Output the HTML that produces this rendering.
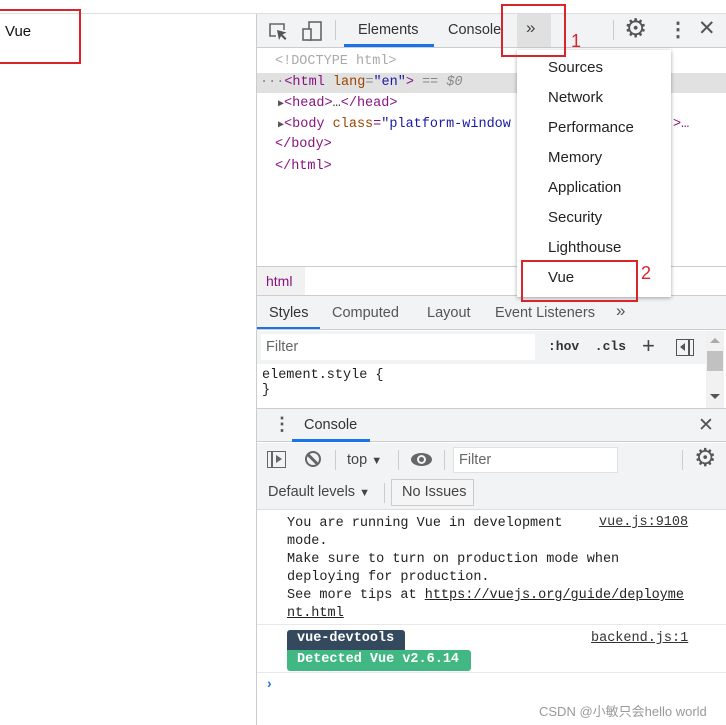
<!DOCTYPE html>
<html><head><style>
*{box-sizing:border-box;margin:0;padding:0}
body{width:726px;height:725px;position:relative;overflow:hidden;background:#fff;font-family:"Liberation Sans","Noto Sans CJK SC",sans-serif;font-size:14px;color:#333}
.a{position:absolute}
.m{font-family:"Liberation Mono",monospace;font-size:13.5px;white-space:pre}
.ui{font-size:14.5px;color:#444}
.red{position:absolute;border:2px solid #d9232d}
.rn{position:absolute;color:#d9232d;font-size:18px}
.tab{position:absolute;font-size:14.5px;color:#333}
</style></head><body>
<div class="a" style="left:0;top:13px;width:726px;height:1px;background:#ddd"></div>
<div class="a" style="left:5px;top:23px;font-size:15px;color:#111">Vue</div>
<div class="red" style="left:-2px;top:9px;width:83px;height:55px"></div>

<div class="a" style="left:256px;top:14px;width:470px;height:711px;border-left:1px solid #ccc;background:#fff"></div>
<div class="a" style="left:257px;top:14px;width:469px;height:34px;background:#f1f3f4;border-bottom:1px solid #ccc"></div>
<svg class="a" style="left:268px;top:21px" width="20" height="20" viewBox="0 0 20 20"><path d="M8 15H2V3h14v6" fill="none" stroke="#666" stroke-width="1.6"/><path d="M9 9l2 10 2-4 4 4 1.5-1.5-4-4 4-2z" fill="#555"/></svg>
<svg class="a" style="left:301px;top:20px" width="22" height="22" viewBox="0 0 22 22"><rect x="8" y="2" width="12" height="18" fill="none" stroke="#666" stroke-width="1.6"/><rect x="2" y="9" width="8" height="11" fill="#f1f3f4" stroke="#666" stroke-width="1.6"/></svg>
<div class="a" style="left:335px;top:20px;width:1px;height:20px;background:#ccc"></div>
<div class="tab" style="left:358px;top:22px">Elements</div>
<div class="a" style="left:344px;top:44px;width:90px;height:3px;background:#1a73e8"></div>
<div class="tab" style="left:448px;top:22px">Console</div>
<div class="a" style="left:517px;top:14px;width:34px;height:33px;background:#e0e0e0"></div>
<div class="a" style="left:526px;top:18px;font-size:17px;color:#444">»</div>
<div class="a" style="left:613px;top:20px;width:1px;height:20px;background:#ccc"></div>
<div class="a" style="left:624px;top:13px;font-size:26px;color:#555">⚙</div>
<div class="a" style="left:668px;top:17px;font-size:20px;color:#555;font-weight:bold">⋮</div>
<div class="a" style="left:698px;top:16px;font-size:21px;color:#555">✕</div>

<div class="a" style="left:257px;top:73px;width:469px;height:20px;background:#e1e1e1"></div>
<div class="a m" style="left:275px;top:54px;color:#aaa">&lt;!DOCTYPE html&gt;</div>
<div class="a m" style="left:260px;top:75px;color:#888">···<span style="color:#881280">&lt;html</span> <span style="color:#994500">lang</span>=<span style="color:#1a1aa6">"en"</span><span style="color:#881280">&gt;</span> == <i>$0</i></div>
<div class="a m" style="left:278px;top:96px;color:#881280"><span style="color:#555;font-size:10px">▶</span>&lt;head&gt;<span style="color:#333">…</span>&lt;/head&gt;</div>
<div class="a m" style="left:278px;top:117px;color:#881280"><span style="color:#555;font-size:10px">▶</span>&lt;body <span style="color:#994500">class</span>=<span style="color:#1a1aa6">"platform-window</span></div>
<div class="a m" style="left:673px;top:117px;color:#881280">&gt;…</div>
<div class="a m" style="left:275px;top:137px;color:#881280">&lt;/body&gt;</div>
<div class="a m" style="left:275px;top:159px;color:#881280">&lt;/html&gt;</div>

<div class="a" style="left:257px;top:266px;width:469px;height:30px;background:#fff;border-top:1px solid #ccc;border-bottom:1px solid #ccc"></div>
<div class="a" style="left:257px;top:267px;width:48px;height:28px;background:#f1f1f1"></div>
<div class="a" style="left:266px;top:273px;font-size:14px;color:#881280">html</div>

<div class="a" style="left:257px;top:296px;width:469px;height:34px;background:#f1f3f4;border-bottom:1px solid #ccc"></div>
<div class="tab" style="left:269px;top:305px">Styles</div>
<div class="a" style="left:257px;top:327px;width:63px;height:2px;background:#1a73e8"></div>
<div class="tab" style="left:332px;top:305px;color:#555">Computed</div>
<div class="tab" style="left:427px;top:305px;color:#555">Layout</div>
<div class="tab" style="left:495px;top:305px;color:#555">Event Listeners</div>
<div class="a" style="left:616px;top:301px;font-size:17px;color:#555">»</div>
<div class="a" style="left:257px;top:331px;width:449px;height:33px;background:#f1f3f4"></div>
<div class="a" style="left:261px;top:334px;width:274px;height:26px;background:#fff"></div>
<div class="a ui" style="left:266px;top:339px;color:#666">Filter</div>
<div class="a m" style="left:548px;top:339px;font-weight:bold;color:#333;font-size:13px">:hov  .cls</div>
<div class="a" style="left:642px;top:333px;font-size:22px;color:#444">+</div>
<div class="a" style="left:676px;top:339px;width:18px;height:17px;border:1.5px solid #555"></div>
<div class="a" style="left:688px;top:339px;width:1.5px;height:17px;background:#555"></div>
<div class="a" style="left:680px;top:343px;width:0;height:0;border-top:4px solid transparent;border-bottom:4px solid transparent;border-right:5px solid #555"></div>
<div class="a" style="left:706px;top:331px;width:18px;height:77px;background:#f1f1f1"></div>
<div class="a" style="left:707px;top:351px;width:16px;height:20px;background:#c1c1c1"></div>
<div class="a" style="left:710px;top:338px;border-left:5px solid transparent;border-right:5px solid transparent;border-bottom:5px solid #aaa"></div>
<div class="a" style="left:710px;top:394px;border-left:5px solid transparent;border-right:5px solid transparent;border-top:5px solid #555"></div>
<div class="a m" style="left:262px;top:368px;color:#222">element.style {
}</div>

<div class="a" style="left:257px;top:408px;width:469px;height:34px;background:#f1f3f4;border-top:1px solid #ccc;border-bottom:1px solid #ccc"></div>
<div class="a" style="left:273px;top:414px;font-size:18px;color:#555;font-weight:bold">⋮</div>
<div class="tab" style="left:304px;top:417px">Console</div>
<div class="a" style="left:292px;top:439px;width:78px;height:3px;background:#1a73e8"></div>
<div class="a" style="left:698px;top:414px;font-size:19px;color:#555">✕</div>
<div class="a" style="left:257px;top:443px;width:469px;height:67px;background:#f1f3f4;border-bottom:1px solid #ddd"></div>
<div class="a" style="left:267px;top:451px;width:19px;height:17px;border:1.5px solid #666"></div>
<div class="a" style="left:271px;top:451px;width:1.5px;height:17px;background:#666"></div>
<div class="a" style="left:276px;top:455px;border-top:4.5px solid transparent;border-bottom:4.5px solid transparent;border-left:6px solid #666"></div>
<div class="a" style="left:305px;top:451px;width:16px;height:16px;border:2.5px solid #666;border-radius:50%"></div>
<div class="a" style="left:306px;top:458px;width:14px;height:2.5px;background:#666;transform:rotate(45deg)"></div>
<div class="a" style="left:335px;top:450px;width:1px;height:20px;background:#ccc"></div>
<div class="a ui" style="left:347px;top:452px">top <span style="font-size:11px">▼</span></div>
<div class="a" style="left:398px;top:450px;width:1px;height:20px;background:#ccc"></div>
<div class="a" style="left:411px;top:453px;width:21px;height:13px;border-radius:50%;background:#666"></div>
<div class="a" style="left:417px;top:455px;width:9px;height:9px;border-radius:50%;background:#f1f3f4"></div>
<div class="a" style="left:419px;top:457px;width:5px;height:5px;border-radius:50%;background:#666"></div>
<div class="a" style="left:444px;top:450px;width:1px;height:20px;background:#ccc"></div>
<div class="a" style="left:453px;top:447px;width:165px;height:26px;background:#fff;border:1px solid #e0e0e0"></div>
<div class="a ui" style="left:459px;top:452px;color:#666">Filter</div>
<div class="a" style="left:682px;top:450px;width:1px;height:20px;background:#ccc"></div>
<div class="a" style="left:694px;top:443px;font-size:25px;color:#555">⚙</div>
<div class="a ui" style="left:268px;top:484px">Default levels <span style="font-size:11px">▼</span></div>
<div class="a" style="left:384px;top:483px;width:1px;height:20px;background:#ccc"></div>
<div class="a" style="left:391px;top:479px;width:83px;height:27px;border:1px solid #ccc;background:#f5f5f5"></div>
<div class="a ui" style="left:402px;top:484px">No Issues</div>

<div class="a m" style="left:287px;top:515px;color:#222;line-height:18px">You are running Vue in development
mode.
Make sure to turn on production mode when
deploying for production.
See more tips at <u>https://vuejs.org/guide/deployme</u>
<u>nt.html</u></div>
<div class="a m" style="left:599px;top:515px;color:#333"><u>vue.js:9108</u></div>
<div class="a" style="left:257px;top:624px;width:469px;height:1px;background:#e8e8e8"></div>
<div class="a m" style="left:287px;top:630px;width:118px;height:20px;background:#35495e;color:#fff;font-weight:bold;padding:1px 10px;border-radius:3px 3px 0 0">vue-devtools</div>
<div class="a m" style="left:287px;top:650px;width:184px;height:21px;background:#41b883;color:#fff;font-weight:bold;padding:2px 10px;border-radius:0 3px 3px 3px">Detected Vue v2.6.14</div>
<div class="a m" style="left:591px;top:631px;color:#333"><u>backend.js:1</u></div>
<div class="a" style="left:257px;top:672px;width:469px;height:1px;background:#e8e8e8"></div>
<div class="a" style="left:267px;top:675px;color:#1a73e8;font-weight:bold;font-size:14px">›</div>
<div class="a" style="left:539px;top:701px;font-size:13px;color:#999">CSDN @小敏只会hello world</div>

<div class="a" style="left:517px;top:50px;width:154px;height:247px;background:#fff;box-shadow:0 1px 4px rgba(0,0,0,.35)"></div>
<div class="a" style="left:548px;top:53px;font-size:15px;color:#222;line-height:30px">Sources<br>Network<br>Performance<br>Memory<br>Application<br>Security<br>Lighthouse<br>Vue</div>

<div class="red" style="left:501px;top:4px;width:65px;height:53px"></div>
<div class="rn" style="left:571px;top:31px">1</div>
<div class="red" style="left:521px;top:260px;width:117px;height:42px"></div>
<div class="rn" style="left:641px;top:263px">2</div>
</body></html>
